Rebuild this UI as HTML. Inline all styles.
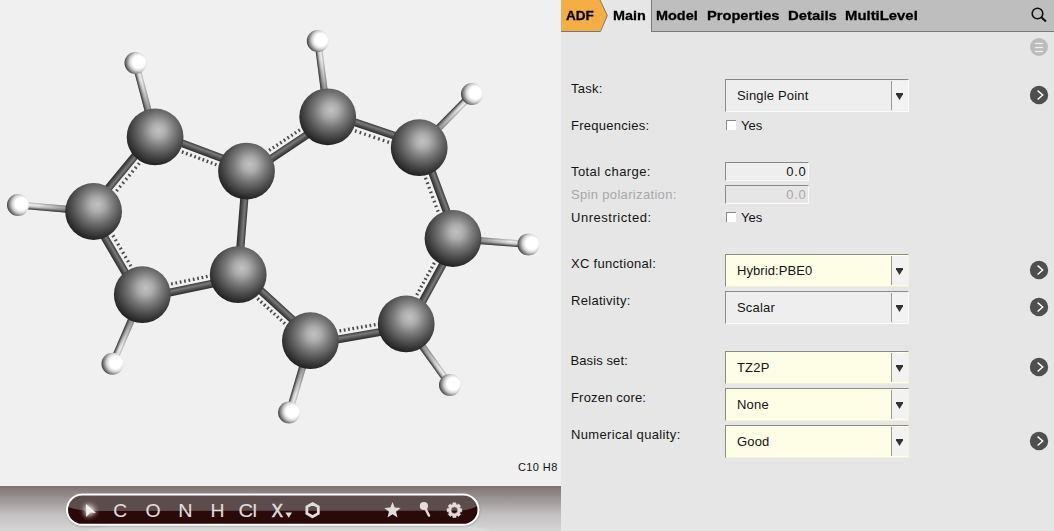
<!DOCTYPE html>
<html><head><meta charset="utf-8">
<style>
html,body{margin:0;padding:0;}
body{width:1054px;height:531px;overflow:hidden;position:relative;background:#e6e6e6;font-family:"Liberation Sans",sans-serif;}
#left{position:absolute;left:0;top:0;width:561px;height:486px;background:#f0f0f0;overflow:hidden;}
#tb{position:absolute;left:0;top:486px;width:561px;height:45px;background:linear-gradient(#7d7272,#a29c9c 35%,#c4c2c2 65%,#d6d6d6);overflow:hidden;}
#right{position:absolute;left:561px;top:0;width:493px;height:531px;background:#e6e6e6;}
.t{position:absolute;white-space:nowrap;line-height:16px;}
.lab{font-size:13px;color:#141414;}
.tab{font-size:13px;font-weight:bold;color:#000;-webkit-text-stroke:0.3px #000;}
.combo{position:absolute;left:164px;width:184px;height:33px;box-sizing:border-box;background:#eeeeee;border-top:1px solid #8a8a8a;border-left:1px solid #8a8a8a;border-right:1px solid #fafafa;border-bottom:1px solid #fafafa;}
.combo.y{background:#fefde6;border-top-color:#8c8c80;border-left-color:#8c8c80;border-right-color:#f2f2d8;border-bottom-color:#f2f2d8;}
.combo .btn{position:absolute;right:0;top:1px;bottom:1px;width:16px;background:#f2f2f2;border-left:1px solid #9a9a9a;}
.combo .arr{position:absolute;left:4px;top:12px;}
.combo .txt{position:absolute;left:11px;top:8px;letter-spacing:0.18px;font-size:13px;color:#141414;line-height:16px;white-space:nowrap;}
.inp{position:absolute;left:164px;width:84px;height:19px;box-sizing:border-box;background:#eeeeee;border-top:1px solid #8a8a8a;border-left:1px solid #8a8a8a;border-right:1px solid #fafafa;border-bottom:1px solid #fafafa;}
.inp .txt{position:absolute;right:1.5px;top:1px;letter-spacing:0.75px;font-size:13px;line-height:16px;color:#141414;}
.chk{position:absolute;left:165px;width:10px;height:10px;box-sizing:border-box;background:#fff;border-top:1px solid #8a8a8a;border-left:1px solid #8a8a8a;}
.go{position:absolute;left:469px;width:18px;height:18px;border-radius:50%;background:#4e4e4e;}
</style></head><body>
<div id="left">
<svg width="561" height="486" viewBox="0 0 561 486" style="position:absolute;left:0;top:0"><defs>
<radialGradient id="rc" cx="0.56" cy="0.385" r="0.64" fx="0.56" fy="0.385">
<stop offset="0" stop-color="#c2c2c2"/><stop offset="0.2" stop-color="#acacac"/><stop offset="0.46" stop-color="#787878"/><stop offset="0.72" stop-color="#4a4a4a"/><stop offset="1" stop-color="#1c1c1c"/></radialGradient>
<radialGradient id="rh" cx="0.65" cy="0.45" r="0.7" fx="0.65" fy="0.45">
<stop offset="0" stop-color="#ffffff"/><stop offset="0.4" stop-color="#ffffff"/><stop offset="0.6" stop-color="#d2d2d2"/><stop offset="0.84" stop-color="#6a6a6a"/><stop offset="1" stop-color="#1e1e1e"/></radialGradient>
<linearGradient id="al" x1="0" y1="0" x2="1" y2="0"><stop offset="0.3" stop-color="#404040" stop-opacity="0.55"/><stop offset="0.75" stop-color="#404040" stop-opacity="0"/></linearGradient>
<linearGradient id="alR" x1="1" y1="0" x2="0" y2="0"><stop offset="0.3" stop-color="#404040" stop-opacity="0.55"/><stop offset="0.75" stop-color="#404040" stop-opacity="0"/></linearGradient>
<linearGradient id="gc" x1="0" y1="0" x2="0" y2="1">
<stop offset="0" stop-color="#3a3a3a"/><stop offset="0.35" stop-color="#7a7a7a"/><stop offset="0.6" stop-color="#5a5a5a"/><stop offset="1" stop-color="#2a2a2a"/></linearGradient>
<linearGradient id="gc2" x1="0" y1="0" x2="0" y2="1">
<stop offset="0" stop-color="#666"/><stop offset="0.35" stop-color="#a8a8a8"/><stop offset="0.65" stop-color="#777"/><stop offset="1" stop-color="#303030"/></linearGradient>
<linearGradient id="gh" x1="0" y1="0" x2="0" y2="1">
<stop offset="0" stop-color="#b0b0b0"/><stop offset="0.3" stop-color="#eeeeee"/><stop offset="0.6" stop-color="#c4c4c4"/><stop offset="1" stop-color="#2c2c2c"/></linearGradient>
</defs><g transform="translate(156.33,133.62) rotate(20.51)"><rect x="0" y="-3.90" width="97.59" height="7.80" fill="url(#gc)"/></g><line x1="181.91" y1="151.84" x2="183.51" y2="152.44" stroke="#4a4a4a" stroke-width="3.3"/><line x1="186.03" y1="153.39" x2="187.63" y2="153.98" stroke="#4a4a4a" stroke-width="3.3"/><line x1="190.15" y1="154.93" x2="191.74" y2="155.52" stroke="#4a4a4a" stroke-width="3.3"/><line x1="194.27" y1="156.47" x2="195.86" y2="157.06" stroke="#4a4a4a" stroke-width="3.3"/><line x1="198.39" y1="158.01" x2="199.98" y2="158.61" stroke="#4a4a4a" stroke-width="3.3"/><line x1="202.51" y1="159.55" x2="204.10" y2="160.15" stroke="#4a4a4a" stroke-width="3.3"/><line x1="206.63" y1="161.09" x2="208.22" y2="161.69" stroke="#4a4a4a" stroke-width="3.3"/><line x1="210.75" y1="162.63" x2="212.34" y2="163.23" stroke="#4a4a4a" stroke-width="3.3"/><line x1="214.87" y1="164.18" x2="216.46" y2="164.77" stroke="#4a4a4a" stroke-width="3.3"/><g transform="translate(152.40,134.67) rotate(129.50)"><rect x="0" y="-3.90" width="96.68" height="7.80" fill="url(#gc)"/></g><line x1="139.34" y1="163.24" x2="138.26" y2="164.56" stroke="#4a4a4a" stroke-width="3.3"/><line x1="136.23" y1="167.02" x2="135.15" y2="168.33" stroke="#4a4a4a" stroke-width="3.3"/><line x1="133.11" y1="170.80" x2="132.03" y2="172.11" stroke="#4a4a4a" stroke-width="3.3"/><line x1="130.00" y1="174.58" x2="128.92" y2="175.89" stroke="#4a4a4a" stroke-width="3.3"/><line x1="126.88" y1="178.36" x2="125.80" y2="179.67" stroke="#4a4a4a" stroke-width="3.3"/><line x1="123.77" y1="182.14" x2="122.69" y2="183.45" stroke="#4a4a4a" stroke-width="3.3"/><line x1="120.65" y1="185.92" x2="119.57" y2="187.23" stroke="#4a4a4a" stroke-width="3.3"/><line x1="117.54" y1="189.70" x2="116.46" y2="191.01" stroke="#4a4a4a" stroke-width="3.3"/><g transform="translate(90.58,213.27) rotate(59.66)"><rect x="0" y="-3.90" width="96.41" height="7.80" fill="url(#gc)"/></g><line x1="112.90" y1="235.37" x2="113.76" y2="236.84" stroke="#4a4a4a" stroke-width="3.3"/><line x1="115.36" y1="239.56" x2="116.21" y2="241.03" stroke="#4a4a4a" stroke-width="3.3"/><line x1="117.81" y1="243.75" x2="118.67" y2="245.22" stroke="#4a4a4a" stroke-width="3.3"/><line x1="120.26" y1="247.95" x2="121.12" y2="249.41" stroke="#4a4a4a" stroke-width="3.3"/><line x1="122.72" y1="252.14" x2="123.58" y2="253.61" stroke="#4a4a4a" stroke-width="3.3"/><line x1="125.17" y1="256.33" x2="126.03" y2="257.80" stroke="#4a4a4a" stroke-width="3.3"/><line x1="127.63" y1="260.52" x2="128.48" y2="261.99" stroke="#4a4a4a" stroke-width="3.3"/><line x1="130.08" y1="264.72" x2="130.94" y2="266.18" stroke="#4a4a4a" stroke-width="3.3"/><g transform="translate(143.01,298.13) rotate(-11.78)"><rect x="0" y="-3.90" width="97.96" height="7.80" fill="url(#gc)"/></g><line x1="171.07" y1="284.00" x2="172.74" y2="283.65" stroke="#4a4a4a" stroke-width="3.3"/><line x1="175.42" y1="283.09" x2="177.09" y2="282.75" stroke="#4a4a4a" stroke-width="3.3"/><line x1="179.78" y1="282.19" x2="181.44" y2="281.84" stroke="#4a4a4a" stroke-width="3.3"/><line x1="184.13" y1="281.28" x2="185.79" y2="280.93" stroke="#4a4a4a" stroke-width="3.3"/><line x1="188.48" y1="280.37" x2="190.14" y2="280.02" stroke="#4a4a4a" stroke-width="3.3"/><line x1="192.83" y1="279.46" x2="194.49" y2="279.12" stroke="#4a4a4a" stroke-width="3.3"/><line x1="197.18" y1="278.56" x2="198.85" y2="278.21" stroke="#4a4a4a" stroke-width="3.3"/><line x1="201.53" y1="277.65" x2="203.20" y2="277.30" stroke="#4a4a4a" stroke-width="3.3"/><line x1="205.89" y1="276.74" x2="207.55" y2="276.39" stroke="#4a4a4a" stroke-width="3.3"/><g transform="translate(246.50,171.10) rotate(94.58)"><rect x="0" y="-4.10" width="103.93" height="8.20" fill="url(#gc)"/></g><g transform="translate(248.45,174.01) rotate(-33.77)"><rect x="0" y="-3.90" width="97.68" height="7.80" fill="url(#gc)"/></g><line x1="269.17" y1="150.41" x2="270.58" y2="149.46" stroke="#4a4a4a" stroke-width="3.3"/><line x1="272.84" y1="147.95" x2="274.25" y2="147.01" stroke="#4a4a4a" stroke-width="3.3"/><line x1="276.50" y1="145.50" x2="277.92" y2="144.56" stroke="#4a4a4a" stroke-width="3.3"/><line x1="280.17" y1="143.05" x2="281.58" y2="142.11" stroke="#4a4a4a" stroke-width="3.3"/><line x1="283.84" y1="140.60" x2="285.25" y2="139.65" stroke="#4a4a4a" stroke-width="3.3"/><line x1="287.50" y1="138.15" x2="288.92" y2="137.20" stroke="#4a4a4a" stroke-width="3.3"/><line x1="291.17" y1="135.70" x2="292.58" y2="134.75" stroke="#4a4a4a" stroke-width="3.3"/><line x1="294.83" y1="133.24" x2="296.25" y2="132.30" stroke="#4a4a4a" stroke-width="3.3"/><line x1="298.50" y1="130.79" x2="299.91" y2="129.85" stroke="#4a4a4a" stroke-width="3.3"/><g transform="translate(328.82,113.48) rotate(18.66)"><rect x="0" y="-3.90" width="96.58" height="7.80" fill="url(#gc)"/></g><line x1="354.98" y1="130.87" x2="356.59" y2="131.41" stroke="#4a4a4a" stroke-width="3.3"/><line x1="359.61" y1="132.43" x2="361.22" y2="132.97" stroke="#4a4a4a" stroke-width="3.3"/><line x1="364.23" y1="133.99" x2="365.84" y2="134.54" stroke="#4a4a4a" stroke-width="3.3"/><line x1="368.86" y1="135.56" x2="370.47" y2="136.10" stroke="#4a4a4a" stroke-width="3.3"/><line x1="373.49" y1="137.12" x2="375.10" y2="137.66" stroke="#4a4a4a" stroke-width="3.3"/><line x1="378.11" y1="138.68" x2="379.72" y2="139.22" stroke="#4a4a4a" stroke-width="3.3"/><line x1="382.74" y1="140.24" x2="384.35" y2="140.79" stroke="#4a4a4a" stroke-width="3.3"/><line x1="387.36" y1="141.80" x2="388.97" y2="142.35" stroke="#4a4a4a" stroke-width="3.3"/><g transform="translate(422.48,146.48) rotate(69.58)"><rect x="0" y="-3.90" width="96.89" height="7.80" fill="url(#gc)"/></g><line x1="425.48" y1="177.75" x2="426.07" y2="179.34" stroke="#4a4a4a" stroke-width="3.3"/><line x1="427.20" y1="182.37" x2="427.79" y2="183.96" stroke="#4a4a4a" stroke-width="3.3"/><line x1="428.91" y1="186.98" x2="429.51" y2="188.58" stroke="#4a4a4a" stroke-width="3.3"/><line x1="430.63" y1="191.60" x2="431.23" y2="193.19" stroke="#4a4a4a" stroke-width="3.3"/><line x1="432.35" y1="196.22" x2="432.94" y2="197.81" stroke="#4a4a4a" stroke-width="3.3"/><line x1="434.07" y1="200.83" x2="434.66" y2="202.43" stroke="#4a4a4a" stroke-width="3.3"/><line x1="435.79" y1="205.45" x2="436.38" y2="207.04" stroke="#4a4a4a" stroke-width="3.3"/><line x1="437.51" y1="210.07" x2="438.10" y2="211.66" stroke="#4a4a4a" stroke-width="3.3"/><g transform="translate(456.07,240.18) rotate(118.72)"><rect x="0" y="-3.90" width="97.38" height="7.80" fill="url(#gc)"/></g><line x1="434.38" y1="262.90" x2="433.56" y2="264.40" stroke="#4a4a4a" stroke-width="3.3"/><line x1="432.28" y1="266.74" x2="431.46" y2="268.23" stroke="#4a4a4a" stroke-width="3.3"/><line x1="430.18" y1="270.57" x2="429.36" y2="272.07" stroke="#4a4a4a" stroke-width="3.3"/><line x1="428.08" y1="274.41" x2="427.26" y2="275.90" stroke="#4a4a4a" stroke-width="3.3"/><line x1="425.97" y1="278.24" x2="425.16" y2="279.73" stroke="#4a4a4a" stroke-width="3.3"/><line x1="423.87" y1="282.08" x2="423.06" y2="283.57" stroke="#4a4a4a" stroke-width="3.3"/><line x1="421.77" y1="285.91" x2="420.95" y2="287.40" stroke="#4a4a4a" stroke-width="3.3"/><line x1="419.67" y1="289.75" x2="418.85" y2="291.24" stroke="#4a4a4a" stroke-width="3.3"/><line x1="417.57" y1="293.58" x2="416.75" y2="295.07" stroke="#4a4a4a" stroke-width="3.3"/><g transform="translate(311.00,344.15) rotate(-9.95)"><rect x="0" y="-3.90" width="97.26" height="7.80" fill="url(#gc)"/></g><line x1="375.51" y1="324.61" x2="373.84" y2="324.91" stroke="#4a4a4a" stroke-width="3.3"/><line x1="371.22" y1="325.36" x2="369.54" y2="325.66" stroke="#4a4a4a" stroke-width="3.3"/><line x1="366.93" y1="326.12" x2="365.25" y2="326.41" stroke="#4a4a4a" stroke-width="3.3"/><line x1="362.63" y1="326.87" x2="360.96" y2="327.16" stroke="#4a4a4a" stroke-width="3.3"/><line x1="358.34" y1="327.62" x2="356.67" y2="327.92" stroke="#4a4a4a" stroke-width="3.3"/><line x1="354.05" y1="328.38" x2="352.38" y2="328.67" stroke="#4a4a4a" stroke-width="3.3"/><line x1="349.76" y1="329.13" x2="348.08" y2="329.42" stroke="#4a4a4a" stroke-width="3.3"/><line x1="345.47" y1="329.88" x2="343.79" y2="330.17" stroke="#4a4a4a" stroke-width="3.3"/><line x1="341.17" y1="330.63" x2="339.50" y2="330.93" stroke="#4a4a4a" stroke-width="3.3"/><g transform="translate(240.56,272.12) rotate(42.43)"><rect x="0" y="-3.90" width="97.82" height="7.80" fill="url(#gc)"/></g><line x1="284.90" y1="323.62" x2="283.64" y2="322.47" stroke="#4a4a4a" stroke-width="3.3"/><line x1="281.63" y1="320.63" x2="280.37" y2="319.48" stroke="#4a4a4a" stroke-width="3.3"/><line x1="278.36" y1="317.64" x2="277.10" y2="316.50" stroke="#4a4a4a" stroke-width="3.3"/><line x1="275.09" y1="314.66" x2="273.84" y2="313.51" stroke="#4a4a4a" stroke-width="3.3"/><line x1="271.82" y1="311.67" x2="270.57" y2="310.52" stroke="#4a4a4a" stroke-width="3.3"/><line x1="268.56" y1="308.68" x2="267.30" y2="307.53" stroke="#4a4a4a" stroke-width="3.3"/><line x1="265.29" y1="305.69" x2="264.03" y2="304.55" stroke="#4a4a4a" stroke-width="3.3"/><line x1="262.02" y1="302.71" x2="260.77" y2="301.56" stroke="#4a4a4a" stroke-width="3.3"/><line x1="258.75" y1="299.72" x2="257.50" y2="298.57" stroke="#4a4a4a" stroke-width="3.3"/><g transform="translate(135.50,63.00) rotate(75.15)"><rect x="0" y="-3.50" width="76.46" height="7.00" fill="url(#gh)"/><rect x="0" y="-3.50" width="76.46" height="7.00" fill="url(#alR)"/></g><g transform="translate(317.80,41.00) rotate(82.56)"><rect x="0" y="-3.50" width="76.44" height="7.00" fill="url(#gh)"/><rect x="0" y="-3.50" width="76.44" height="7.00" fill="url(#alR)"/></g><g transform="translate(472.00,94.00) rotate(134.52)"><rect x="0" y="-3.50" width="75.31" height="7.00" fill="url(#gh)"/><rect x="0" y="-3.50" width="75.31" height="7.00" fill="url(#alR)"/></g><g transform="translate(453.00,238.50) rotate(4.47)"><rect x="0" y="-3.50" width="75.73" height="7.00" fill="url(#gh)"/><rect x="0" y="-3.50" width="75.73" height="7.00" fill="url(#al)"/></g><g transform="translate(406.20,323.90) rotate(54.36)"><rect x="0" y="-3.50" width="75.18" height="7.00" fill="url(#gh)"/><rect x="0" y="-3.50" width="75.18" height="7.00" fill="url(#al)"/></g><g transform="translate(310.40,340.70) rotate(106.52)"><rect x="0" y="-3.50" width="74.89" height="7.00" fill="url(#gh)"/><rect x="0" y="-3.50" width="74.89" height="7.00" fill="url(#al)"/></g><g transform="translate(142.30,294.70) rotate(113.36)"><rect x="0" y="-3.50" width="75.16" height="7.00" fill="url(#gh)"/><rect x="0" y="-3.50" width="75.16" height="7.00" fill="url(#al)"/></g><g transform="translate(18.00,205.00) rotate(4.91)"><rect x="0" y="-3.50" width="75.88" height="7.00" fill="url(#gh)"/><rect x="0" y="-3.50" width="75.88" height="7.00" fill="url(#alR)"/></g><circle cx="155.1" cy="136.9" r="28.4" fill="url(#rc)"/><circle cx="246.5" cy="171.1" r="28.4" fill="url(#rc)"/><circle cx="327.7" cy="116.8" r="28.4" fill="url(#rc)"/><circle cx="419.2" cy="147.7" r="28.4" fill="url(#rc)"/><circle cx="453" cy="238.5" r="28.4" fill="url(#rc)"/><circle cx="406.2" cy="323.9" r="28.4" fill="url(#rc)"/><circle cx="310.4" cy="340.7" r="28.4" fill="url(#rc)"/><circle cx="238.2" cy="274.7" r="28.4" fill="url(#rc)"/><circle cx="142.3" cy="294.7" r="28.4" fill="url(#rc)"/><circle cx="93.6" cy="211.5" r="28.4" fill="url(#rc)"/><circle cx="135.5" cy="63" r="11" fill="url(#rh)"/><circle cx="317.8" cy="41" r="11" fill="url(#rh)"/><circle cx="472" cy="94" r="11" fill="url(#rh)"/><circle cx="528.5" cy="244.4" r="11" fill="url(#rh)"/><circle cx="450" cy="385" r="11" fill="url(#rh)"/><circle cx="289.1" cy="412.5" r="11" fill="url(#rh)"/><circle cx="112.5" cy="363.7" r="11" fill="url(#rh)"/><circle cx="18" cy="205" r="11" fill="url(#rh)"/></svg>
<div class="t" style="left:518px;top:459px;font-size:11px;color:#111;letter-spacing:0.4px">C10 H8</div>
</div>
<div id="tb">
<svg width="561" height="45" style="position:absolute;left:0;top:0"><defs>
<linearGradient id="pillTop" x1="0" y1="0" x2="0" y2="1"><stop offset="0" stop-color="#5c4b4b"/><stop offset="1" stop-color="#5f4e4e"/></linearGradient>
<radialGradient id="glow" cx="0.5" cy="0.5" r="0.5"><stop offset="0" stop-color="#ffffff" stop-opacity="0.95"/><stop offset="0.35" stop-color="#ffffff" stop-opacity="0.55"/><stop offset="0.7" stop-color="#ffffff" stop-opacity="0.15"/><stop offset="1" stop-color="#ffffff" stop-opacity="0"/></radialGradient>
<filter id="bl" x="-100%" y="-100%" width="300%" height="300%"><feGaussianBlur stdDeviation="2.2"/></filter><filter id="sh" x="-10%" y="-50%" width="120%" height="200%"><feGaussianBlur stdDeviation="1.2"/></filter>
<clipPath id="pc"><rect x="67" y="8.5" width="411.5" height="30.3" rx="15.15"/></clipPath>
</defs><rect x="66.5" y="8.5" width="413" height="32" rx="16" fill="#000" opacity="0.25" filter="url(#sh)"/><path d="M 90 45 Q 100 40 120 40 L 470 40 Q 480 40 490 45 Z" fill="#ffffff" opacity="0.15"/><g clip-path="url(#pc)"><rect x="60" y="0" width="430" height="45" fill="#2a0909"/><path d="M 60 0 L 490 0 L 490 14 L 478 19.5 Q 472 23.5 460 24.7 L 100 24.9 Q 74 24.9 66 20 L 60 16 Z" fill="#5d4c4c"/></g><rect x="67" y="8.5" width="411.5" height="30.3" rx="15.15" fill="none" stroke="#ffffff" stroke-width="2"/><circle cx="89.5" cy="24.5" r="11" fill="url(#glow)" opacity="0.6"/><polygon points="86,18 96,27 90.2,26.600000000000023 86.3,31" fill="#fff" filter="url(#bl)" opacity="0.9"/><polygon points="86,18 96,27 90.2,26.600000000000023 86.3,31" fill="#f4f0f0"/><text x="113.2" y="30.899999999999977" font-family="Liberation Sans" font-size="18" fill="#e3dcdc" stroke="#e3dcdc" stroke-width="0.1" transform='translate(113.2 0) scale(1.06 1) translate(-113.2 0)'>C</text><text x="145.6" y="30.899999999999977" font-family="Liberation Sans" font-size="18" fill="#e3dcdc" stroke="#e3dcdc" stroke-width="0.1" transform='translate(145.6 0) scale(1.08 1) translate(-145.6 0)'>O</text><text x="178.2" y="30.899999999999977" font-family="Liberation Sans" font-size="18" fill="#e3dcdc" stroke="#e3dcdc" stroke-width="0.1" transform='translate(178.2 0) scale(1.1 1) translate(-178.2 0)'>N</text><text x="210.4" y="30.899999999999977" font-family="Liberation Sans" font-size="18" fill="#e3dcdc" stroke="#e3dcdc" stroke-width="0.1" transform='translate(210.4 0) scale(1.08 1) translate(-210.4 0)'>H</text><text x="238.6" y="30.899999999999977" font-family="Liberation Sans" font-size="18" fill="#e3dcdc" stroke="#e3dcdc" stroke-width="0.1" transform='translate(238.6 0) scale(1.12 1) translate(-238.6 0)' letter-spacing='-0.6'>Cl</text><text x="271.8" y="30.899999999999977" font-family="Liberation Sans" font-size="18" fill="#e3dcdc" stroke="#e3dcdc" stroke-width="0.6" transform='translate(271.8 0) scale(0.93 1) translate(-271.8 0)'>X</text><polygon points="285.4,26.399999999999977 292.0,26.399999999999977 288.7,31.799999999999955" fill="#e3dcdc"/><polygon points="312.60,30.70 306.88,27.40 306.88,20.80 312.60,17.50 318.32,20.80 318.32,27.40" fill="none" stroke="#e3dcdc" stroke-width="2.8"/><polygon points="392.50,16.00 394.67,21.61 400.68,21.94 396.02,25.74 397.55,31.56 392.50,28.30 387.45,31.56 388.98,25.74 384.32,21.94 390.33,21.61" fill="#e3dcdc"/><line x1="424.6" y1="21" x2="429" y2="29.600000000000023" stroke="#e3dcdc" stroke-width="2.4" stroke-linecap="round"/><circle cx="423.9" cy="20" r="4.1" fill="#e3dcdc"/><path d="M 452.77,18.43 L 452.88,16.86 L 455.92,16.86 L 456.03,18.43 L 457.33,18.96 L 458.52,17.93 L 460.67,20.08 L 459.64,21.27 L 460.17,22.57 L 461.74,22.68 L 461.74,25.72 L 460.17,25.83 L 459.64,27.13 L 460.67,28.32 L 458.52,30.47 L 457.33,29.44 L 456.03,29.97 L 455.92,31.54 L 452.88,31.54 L 452.77,29.97 L 451.47,29.44 L 450.28,30.47 L 448.13,28.32 L 449.16,27.13 L 448.63,25.83 L 447.06,25.72 L 447.06,22.68 L 448.63,22.57 L 449.16,21.27 L 448.13,20.08 L 450.28,17.93 L 451.47,18.96 Z M 457.79999999999995,24.19999999999999 A 3.4 3.4 0 1 0 451.0,24.19999999999999 A 3.4 3.4 0 1 0 457.79999999999995,24.19999999999999 Z" fill="#e3dcdc" fill-rule="evenodd" stroke="#e3dcdc" stroke-width="0.6" stroke-linejoin="round"/></svg>
</div>
<div id="right">
<div style="position:absolute;left:90px;top:0;width:403px;height:32px;box-sizing:border-box;background:#bebebe;border-left:1px solid #7a7a7a;border-bottom:1px solid #7a7a7a;"></div>
<svg width="60" height="33" style="position:absolute;left:0;top:0"><polygon points="0,0 39,0 46.3,15.5 39,31.5 0,31.5" fill="#f5ae45"/><polyline points="39,0 46.3,15.5 39.5,31.5 0,31.5" fill="none" stroke="#777" stroke-width="1"/></svg>
<div class="t tab" style="left:4.5px;top:8px;transform:scaleX(1.04);transform-origin:0 0">ADF</div>
<div class="t tab" style="left:52px;top:8px;transform:scaleX(1.107);transform-origin:0 0">Main</div>
<div class="t tab" style="left:95px;top:8px;transform:scaleX(1.11);transform-origin:0 0">Model</div>
<div class="t tab" style="left:146px;top:8px;transform:scaleX(1.127);transform-origin:0 0">Properties</div>
<div class="t tab" style="left:227px;top:8px;transform:scaleX(1.146);transform-origin:0 0">Details</div>
<div class="t tab" style="left:284px;top:8px;transform:scaleX(1.145);transform-origin:0 0">MultiLevel</div>
<svg width="20" height="20" style="position:absolute;left:468px;top:5px"><circle cx="8.5" cy="8.5" r="5.3" fill="none" stroke="#111" stroke-width="1.6"/><line x1="12.3" y1="12.3" x2="17" y2="16.5" stroke="#111" stroke-width="2.2"/></svg>
<svg width="20" height="20" style="position:absolute;left:469px;top:37px"><circle cx="9" cy="10" r="9" fill="#bcbcbc"/><g stroke="#eee" stroke-width="1.3"><line x1="5" y1="6.5" x2="13" y2="6.5"/><line x1="5" y1="10.5" x2="13" y2="10.5"/><line x1="5" y1="14.5" x2="13" y2="14.5"/></g></svg>

<div class="t lab" style="left:10px;top:81px;letter-spacing:0.25px">Task:</div>
<div class="t lab" style="left:10px;top:118px;letter-spacing:0.27px">Frequencies:</div>
<div class="t lab" style="left:10px;top:164px;letter-spacing:0.42px">Total charge:</div>
<div class="t lab" style="left:10px;top:187px;letter-spacing:0.33px;color:#a8a8a8">Spin polarization:</div>
<div class="t lab" style="left:10px;top:210px;letter-spacing:0.53px">Unrestricted:</div>
<div class="t lab" style="left:10px;top:256px;letter-spacing:0.3px">XC functional:</div>
<div class="t lab" style="left:10px;top:293px;letter-spacing:0.3px">Relativity:</div>
<div class="t lab" style="left:9.5px;top:353px;letter-spacing:0.1px">Basis set:</div>
<div class="t lab" style="left:10px;top:390px;letter-spacing:0.18px">Frozen core:</div>
<div class="t lab" style="left:10px;top:427px;letter-spacing:0.35px">Numerical quality:</div>

<div class="combo" style="top:79px"><div class="txt">Single Point</div><div class="btn"><svg class="arr" width="8" height="8"><polygon points="0,0 7,0 7,1.2 3.5,7 0,1.2" fill="#333"/></svg></div></div>
<div class="chk" style="top:120px"></div><div class="t lab" style="left:180px;top:118px">Yes</div>
<div class="inp" style="top:162px"><div class="txt">0.0</div></div>
<div class="inp" style="top:185px;background:#e6e6e6"><div class="txt" style="color:#a8a8a8">0.0</div></div>
<div class="chk" style="top:212px"></div><div class="t lab" style="left:180px;top:210px">Yes</div>
<div class="combo y" style="top:254px"><div class="txt" style="letter-spacing:0.08px">Hybrid:PBE0</div><div class="btn"><svg class="arr" width="8" height="8"><polygon points="0,0 7,0 7,1.2 3.5,7 0,1.2" fill="#333"/></svg></div></div>
<div class="combo" style="top:291px"><div class="txt">Scalar</div><div class="btn"><svg class="arr" width="8" height="8"><polygon points="0,0 7,0 7,1.2 3.5,7 0,1.2" fill="#333"/></svg></div></div>
<div class="combo y" style="top:351px"><div class="txt">TZ2P</div><div class="btn"><svg class="arr" width="8" height="8"><polygon points="0,0 7,0 7,1.2 3.5,7 0,1.2" fill="#333"/></svg></div></div>
<div class="combo y" style="top:388px"><div class="txt">None</div><div class="btn"><svg class="arr" width="8" height="8"><polygon points="0,0 7,0 7,1.2 3.5,7 0,1.2" fill="#333"/></svg></div></div>
<div class="combo y" style="top:425px"><div class="txt">Good</div><div class="btn"><svg class="arr" width="8" height="8"><polygon points="0,0 7,0 7,1.2 3.5,7 0,1.2" fill="#333"/></svg></div></div>

<svg width="20" height="20" style="position:absolute;left:468px;top:85px"><circle cx="10" cy="10" r="9.2" fill="#4f4f4f"/><polyline points="8.6,5.6 13.7,10 8.6,14.5" fill="none" stroke="#fff" stroke-width="1.4"/></svg>
<svg width="20" height="20" style="position:absolute;left:468px;top:260px"><circle cx="10" cy="10" r="9.2" fill="#4f4f4f"/><polyline points="8.6,5.6 13.7,10 8.6,14.5" fill="none" stroke="#fff" stroke-width="1.4"/></svg>
<svg width="20" height="20" style="position:absolute;left:468px;top:297px"><circle cx="10" cy="10" r="9.2" fill="#4f4f4f"/><polyline points="8.6,5.6 13.7,10 8.6,14.5" fill="none" stroke="#fff" stroke-width="1.4"/></svg>
<svg width="20" height="20" style="position:absolute;left:468px;top:357px"><circle cx="10" cy="10" r="9.2" fill="#4f4f4f"/><polyline points="8.6,5.6 13.7,10 8.6,14.5" fill="none" stroke="#fff" stroke-width="1.4"/></svg>
<svg width="20" height="20" style="position:absolute;left:468px;top:431px"><circle cx="10" cy="10" r="9.2" fill="#4f4f4f"/><polyline points="8.6,5.6 13.7,10 8.6,14.5" fill="none" stroke="#fff" stroke-width="1.4"/></svg>

</div>
</body></html>
